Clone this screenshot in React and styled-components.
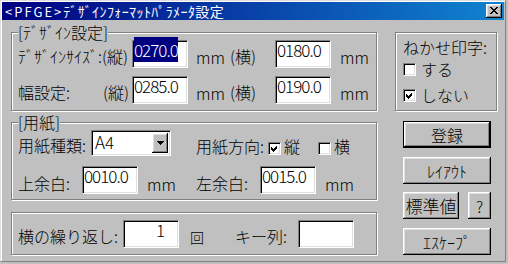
import React from "react";
import styled, { createGlobalStyle } from "styled-components";

const GlobalStyle = createGlobalStyle`
  html, body { margin: 0; padding: 0; background: #c0c0c0; }
  body { font-family: "Noto Sans CJK JP", "Noto Sans", sans-serif; font-weight: 300; color: #000; }
  *, *::before, *::after { box-sizing: border-box; }
`;

const Window = styled.div`
  width: 506px;
  height: 262px;
  background: #c0c0c0;
  border-top: 1px solid #dfdfdf;
  border-left: 1px solid #dfdfdf;
  border-right: 1px solid #808080;
  border-bottom: 1px solid #808080;
  box-shadow: inset 1px 1px #fff;
  padding: 1px;
  display: flex;
  flex-direction: column;
`;

const TitleBar = styled.div`
  height: 18px;
  flex-shrink: 0;
  background: linear-gradient(to right, #000080, #1084d0);
  display: flex;
  align-items: center;
  justify-content: space-between;
  padding: 0 2px 0 3px;
`;

const Title = styled.div`
  color: #fff;
  font-size: 14px;
  font-weight: 400;
  line-height: 18px;
  white-space: nowrap;
  letter-spacing: 0.4px;
`;

const TitleTag = styled.span`
  font-size: 13px;
  letter-spacing: 2px;
`;

const Raised = `
  background: #c0c0c0;
  box-shadow: inset -1px -1px #000, inset 1px 1px #fff, inset -2px -2px #808080, inset 2px 2px #dfdfdf;
`;

const CloseButton = styled.div`
  ${Raised}
  width: 16px;
  height: 14px;
  display: flex;
  align-items: center;
  justify-content: center;
  padding-bottom: 1px;
`;

const Body = styled.div`
  display: flex;
  align-items: flex-start;
  gap: 18px;
  padding: 4px 0 0 9px;
`;

const LeftCol = styled.div`
  width: 366px;
  flex-shrink: 0;
  display: flex;
  flex-direction: column;
`;

const etched = `
  border: 1px solid #808080;
  box-shadow: 1px 1px 0 #fff, inset 1px 1px 0 #fff;
`;

const Group = styled.fieldset`
  ${etched}
  margin: ${(p) => p.$mt || 0}px 0 0 0;
  padding: ${(p) => p.$pt || 0}px 0 0 6px;
  min-inline-size: 0;
  width: 100%;
  height: ${(p) => p.$h}px;
`;

const Legend = styled.legend`
  padding: 0;
  font-size: 16px;
  line-height: 16px;
  background: #c0c0c0;
`;

const Frame = styled.div`
  ${etched}
  margin-top: ${(p) => p.$mt || 0}px;
  width: 100%;
  height: ${(p) => p.$h}px;
  padding: ${(p) => p.$pad};
  display: flex;
  flex-direction: column;
`;

const Row = styled.div`
  display: flex;
  align-items: center;
  height: ${(p) => p.$h || 28}px;
  margin-top: ${(p) => p.$mt || 0}px;
`;

const Text = styled.span`
  flex-shrink: 0;
  display: flex;
  justify-content: space-between;
  width: ${(p) => (p.$w ? `${p.$w}px` : "auto")};
  padding-left: ${(p) => p.$pl || 0}px;
  padding-right: ${(p) => p.$pr || 0}px;
  padding-top: ${(p) => (p.$dy || 0) * 2}px;
  margin-left: ${(p) => p.$ml || 0}px;
  font-size: ${(p) => p.$fs || 16}px;
  line-height: 16px;
  white-space: nowrap;
`;

const sunken = `
  background: #fff;
  border-top: 1px solid #808080;
  border-left: 1px solid #808080;
  border-right: 1px solid #fff;
  border-bottom: 1px solid #fff;
  box-shadow: inset 1px 1px #000, inset -1px -1px #dfdfdf;
`;

const TextBox = styled.div`
  ${sunken}
  flex-shrink: 0;
  width: 56px;
  height: 28px;
  padding: 1px ${(p) => p.$pr || 1}px 0 1px;
  font-size: 17px;
  line-height: 16px;
  letter-spacing: -1px;
  text-align: ${(p) => p.$align || "left"};
  white-space: nowrap;
`;

const Selected = styled.span`
  background: #000080;
  color: #fff;
`;

const Select = styled.div`
  ${sunken}
  flex-shrink: 0;
  width: 80px;
  height: 26px;
  padding: 2px;
  display: flex;
  justify-content: space-between;
`;

const SelectValue = styled.span`
  font-size: 17px;
  line-height: 16px;
  padding: 1px 0 0 1px;
`;

const DropButton = styled.span`
  ${Raised}
  width: 16px;
  height: 100%;
  display: flex;
  align-items: center;
  justify-content: center;
`;

const CheckBox = styled.span`
  ${sunken}
  flex-shrink: 0;
  width: 13px;
  height: 13px;
  margin-top: ${(p) => p.$mt || 0}px;
  margin-left: ${(p) => p.$ml || 0}px;
  display: flex;
  align-items: center;
  justify-content: center;
`;

const RightCol = styled.div`
  width: 102px;
  flex-shrink: 0;
  display: flex;
  flex-direction: column;
  padding-top: 8px;
`;

const Option = styled.div`
  display: flex;
  align-items: center;
  height: 16px;
  margin-top: ${(p) => p.$mt || 0}px;
`;

const ButtonStack = styled.div`
  display: flex;
  flex-direction: column;
  padding-left: 8px;
  margin-top: 10px;
`;

const ButtonRow = styled.div`
  display: flex;
  gap: 9px;
  margin-top: ${(p) => p.$mt || 0}px;
`;

const Button = styled.div`
  ${Raised}
  width: ${(p) => p.$w || 88}px;
  height: 27px;
  margin-top: ${(p) => p.$mt || 0}px;
  display: flex;
  align-items: center;
  justify-content: center;
  font-size: ${(p) => p.$fs || 16}px;
  line-height: 16px;
  white-space: nowrap;
  ${(p) => (p.$default ? "border: 1px solid #000;" : "")}
`;

const Check = () => (
  <svg width="7" height="7" viewBox="0 0 7 7" shapeRendering="crispEdges">
    <polygon points="0,2 2,4 6,0 6,3 2,7 0,5" fill="#000" />
  </svg>
);

const CloseX = () => (
  <svg width="8" height="7" viewBox="0 0 8 7" shapeRendering="crispEdges">
    <path
      d="M0 0h2v1h-2zM6 0h2v1h-2zM1 1h2v1h-2zM5 1h2v1h-2zM2 2h4v1h-4zM3 3h2v1h-2zM2 4h4v1h-4zM1 5h2v1h-2zM5 5h2v1h-2zM0 6h2v1h-2zM6 6h2v1h-2z"
      fill="#000"
    />
  </svg>
);

const DownArrow = () => (
  <svg width="7" height="4" viewBox="0 0 7 4" shapeRendering="crispEdges">
    <path d="M0 0h7v1h-7zM1 1h5v1h-5zM2 2h3v1h-3zM3 3h1v1h-1z" fill="#000" />
  </svg>
);

export default function App() {
  return (
    <>
      <GlobalStyle />
      <Window>
        <TitleBar>
          <Title>
            <TitleTag>&lt;PFGE&gt;</TitleTag>ﾃﾞｻﾞｲﾝﾌｫｰﾏｯﾄﾊﾟﾗﾒｰﾀ設定
          </Title>
          <CloseButton>
            <CloseX />
          </CloseButton>
        </TitleBar>
        <Body>
          <LeftCol>
            <Group $h={87}>
              <Legend>[ﾃﾞｻﾞｲﾝ設定]</Legend>
              <Row>
                <Text $w={114} $dy={1.5}>ﾃﾞｻﾞｲﾝｻｲｽﾞ:(縦)</Text>
                <TextBox>
                  <Selected>0270.0</Selected>
                </TextBox>
                <Text $w={42} $pl={8} $dy={3}>mm</Text>
                <Text $w={45} $dy={1.5}>(横)</Text>
                <TextBox>0180.0</TextBox>
                <Text $pl={9} $dy={3}>mm</Text>
              </Row>
              <Row $mt={8}>
                <Text $w={114} $pr={3} $dy={1.5}>
                  <span>幅設定:</span>
                  <span>(縦)</span>
                </Text>
                <TextBox>0285.0</TextBox>
                <Text $w={42} $pl={8} $dy={3}>mm</Text>
                <Text $w={45} $dy={1.5}>(横)</Text>
                <TextBox>0190.0</TextBox>
                <Text $pl={9} $dy={3}>mm</Text>
              </Row>
            </Group>

            <Group $h={86} $mt={3}>
              <Legend>[用紙]</Legend>
              <Row $h={26}>
                <Text $w={73} $dy={2}>用紙種類:</Text>
                <Select>
                  <SelectValue>A4</SelectValue>
                  <DropButton>
                    <DownArrow />
                  </DropButton>
                </Select>
                <Text $ml={25} $w={72} $dy={2.5}>用紙方向:</Text>
                <CheckBox $mt={11}>
                  <Check />
                </CheckBox>
                <Text $ml={3} $dy={2.5}>縦</Text>
                <CheckBox $mt={11} $ml={18} />
                <Text $ml={3} $dy={2.5}>横</Text>
              </Row>
              <Row $mt={10}>
                <Text $w={64} $dy={2.5}>上余白:</Text>
                <TextBox>0010.0</TextBox>
                <Text $w={58} $pl={9} $dy={4}>mm</Text>
                <Text $w={64} $dy={2.5}>左余白:</Text>
                <TextBox>0015.0</TextBox>
                <Text $pl={9} $dy={4}>mm</Text>
              </Row>
            </Group>

            <Frame $h={43} $mt={12} $pad="7px 0 0 6px">
              <Row>
                <Text $w={105} $dy={2}>横の繰り返し:</Text>
                <TextBox $align="right" $pr={14}>1</TextBox>
                <Text $w={56} $pl={11} $fs={14} $dy={2.5}>回</Text>
                <Text $w={63} $dy={2}>キー列:</Text>
                <TextBox />
              </Row>
            </Frame>
          </LeftCol>

          <RightCol>
            <Frame $h={79} $pad="6px 0 0 7px">
              <Text>ねかせ印字:</Text>
              <Option $mt={6}>
                <CheckBox />
                <Text $ml={5}>する</Text>
              </Option>
              <Option $mt={10}>
                <CheckBox>
                  <Check />
                </CheckBox>
                <Text $ml={5}>しない</Text>
              </Option>
            </Frame>
            <ButtonStack>
              <Button $default>登録</Button>
              <Button $mt={9}>ﾚｲｱｳﾄ</Button>
              <ButtonRow $mt={8}>
                <Button $w={56} $fs={17}>標準値</Button>
                <Button $w={23}>?</Button>
              </ButtonRow>
              <Button $mt={9}>ｴｽｹｰﾌﾟ</Button>
            </ButtonStack>
          </RightCol>
        </Body>
      </Window>
    </>
  );
}
